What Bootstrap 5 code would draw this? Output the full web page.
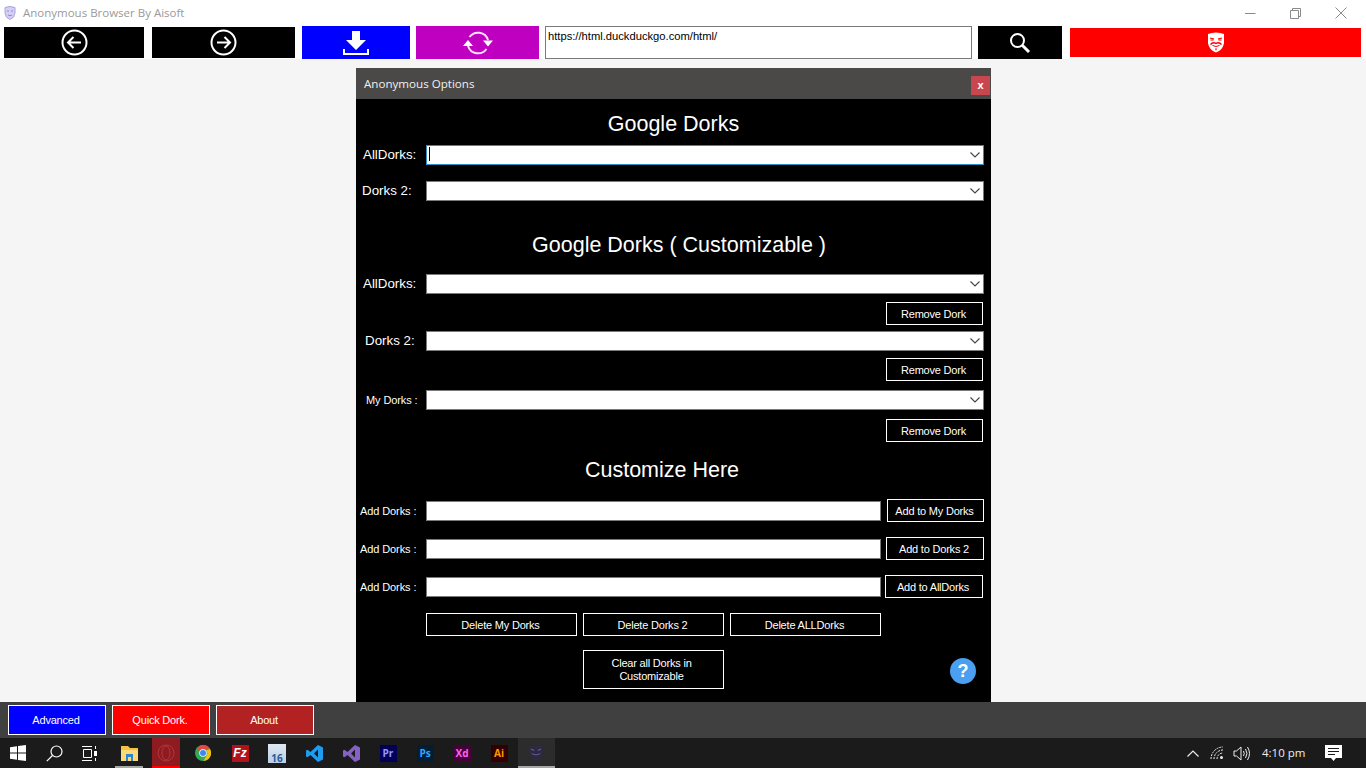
<!DOCTYPE html>
<html lang="en">
<head>
<meta charset="utf-8">
<title>Anonymous Browser By Aisoft</title>
<link href="https://cdn.jsdelivr.net/npm/bootstrap@5.3.0/dist/css/bootstrap.min.css" rel="stylesheet">
<style>
html,body{height:768px;overflow:hidden}
body{background:#f5f5f5;font-family:"Liberation Sans",Arial,sans-serif;font-size:12px;width:1366px}
.shell{height:768px}
.titlebar{height:26px;background:#fff;color:#9a9a9a;font-family:"Open Sans",sans-serif;font-size:11.5px;padding-left:4px;padding-right:2px}
.titlebar .ttl{margin-left:7px}
.winctl{width:45.5px}
.toolbar{height:33px;background:#fff;padding-left:4px}
.tbtn{border:0;border-radius:0;padding:0;display:flex;align-items:center;justify-content:center;flex:none}
.t-back{width:140px;height:31px;background:#000}
.t-fwd{width:143px;height:31px;background:#000;margin-left:8px}
.t-dl{width:108px;height:33px;background:#0000ff;margin-left:7px}
.t-ref{width:123px;height:33px;background:#c000c0;margin-left:6px}
.t-url{width:427px;height:33px;margin-left:6px;border:1px solid #7a7a7a;background:#fff;font-family:"Liberation Sans",sans-serif;font-size:11.2px;padding:2px 2px;color:#000;line-height:15px;border-radius:0;display:block}
.t-srch{width:84px;height:33px;background:#000;margin-left:6px}
.t-red{width:291px;height:29px;background:#ff0000;margin-left:8px}
.stage{flex:1 1 auto;position:relative;background:#f5f5f5}
.dlg{position:absolute;left:356px;top:9px;width:635px;bottom:0;background:#000;color:#fff;overflow:hidden}
.dlg-head{height:31px;background:#4a4947;font-family:"Open Sans",sans-serif;font-size:11.6px;padding-left:8px;color:#f0f0f0}
.dlg-x{position:absolute;left:615px;top:8px;width:19px;height:19px;background:#c8474f;color:#fff;border:0;padding:0;font-size:11px;line-height:17px;font-weight:700;text-align:center}
.hd{font-size:21.5px;line-height:24px;font-weight:400;margin:0;text-align:center}
.hd1{margin-top:13px;width:635px}
.hd2{margin-top:31px;width:646px}
.hd3{margin-top:16px;width:612px}
.frow{display:flex;align-items:center;height:20px}
.flab{width:70px;flex:none;white-space:nowrap}
.lab-big{font-size:13.33px}
.lab-small{font-size:11px;letter-spacing:-.1px;padding-top:1px}
.combo{width:558px;height:20px;flex:none;min-height:0;padding:0 2px;border:1px solid #7a7a7a;border-radius:0;background-color:#fff;background-image:url("data:image/svg+xml,%3csvg xmlns='http://www.w3.org/2000/svg' viewBox='0 0 10 6'%3e%3cpath fill='none' stroke='%23444' stroke-width='1.100' d='M.5.500l4.500 4.500 4.500-4.500'/%3e%3c/svg%3e");background-position:right 3px center;background-size:10px 6px;font-size:12px}
.combo.on{border-color:#2b8fc5}
.caret-line{position:absolute;left:73px;top:2px;width:1px;height:14px;background:#000}
.rbtn{display:block;width:97px;height:23px;padding:1px 2px 0 0;background:#000;border:1px solid #fff;border-radius:0;color:#fff;font-size:11px;letter-spacing:-.2px;line-height:20px;text-align:center}
.rbtn:hover{background:#000;color:#fff}
.input-add{width:455px;height:20px;flex:none;min-height:0;padding:0 2px;border:1px solid #7a7a7a;border-radius:0;font-size:12px}
.addrow{display:flex;align-items:center;height:23px}
.help{position:absolute;left:594px;top:590px;width:26px;height:26px;border-radius:50%;background:#4a9ff0;color:#fff;font-size:18px;font-weight:700;line-height:26px;text-align:center}
.bottombar{height:36px;background:#404040;padding-left:8px;gap:6px}
.bbtn{width:98px;height:30px;padding:0 2px 0 0;border:1px solid #fff;border-radius:0;color:#fff;font-size:11px;letter-spacing:-.2px;line-height:28px}
.b-a{background:#0000ff}.b-q{background:#ff0000}.b-i{background:#b22222}
.taskbar{height:30px;background:#1b1b1b;color:#fff}
.tslot{height:30px;display:flex;align-items:center;justify-content:center;flex:none;position:relative}
.s36{width:36px}.s37{width:37px}
.hl-o::before{content:"";position:absolute;left:4.5px;right:4.5px;top:0;bottom:0;background:#8e1b20;border-bottom:2px solid #ff0000}
.ul::after{content:"";position:absolute;left:4.5px;right:4.5px;bottom:0;height:2px;background:#a8a8a8}
.hl-a{background:#2c2c2c}
.hl-a::after{content:"";position:absolute;left:0;right:0;bottom:0;height:2px;background:#a8a8a8}
.adobe{width:17px;height:17px;display:flex;align-items:center;justify-content:center;font-size:10px;font-weight:700;line-height:1;position:relative;font-family:"Open Sans",sans-serif}
.clock{font-family:"Open Sans",sans-serif;font-size:11.5px;color:#eee;width:42px;text-align:center;white-space:nowrap}
.ps-7a{padding-left:7px}.ps-6a{padding-left:6px}.ps-9a{padding-left:9px}.ps-10a{padding-left:10px}.ps-4a{padding-left:4px}
.lf1{margin-top:9px}.lf2{margin-top:16px}
.hd2{margin-top:32px}
.lf3{margin-top:17px}.rb1{margin:8px 0 0 530px}
.lf4{margin-top:6px}.rb2{margin:7px 0 0 530px}
.lf5{margin-top:9px}.rb3{margin:9px 0 0 530px}
.ar1{margin-top:17px}.ar2{margin-top:15px}
.ab1{margin-left:6px}.ab2{margin-left:5px;width:98px}.ab3{margin-left:4px;width:98px}
.delrow{margin:15px 0 0 70px}.d1,.d3{width:151px}.d2{width:141px;margin:0 6px}
.clearrow{margin:14px 0 0 227px}.clr{width:141px;height:39px;line-height:13px;padding:0 14px 0 10px}
.ml-ex{margin-left:2.500px}
.fz-ic{background:#b3121d;color:#fff;font-style:italic;font-family:"Liberation Sans",sans-serif;font-size:12px}
.six-ic{background:linear-gradient(#dfe8f2,#b9cfe6);color:#2a5a9a;width:18px;height:19px;font-size:10px;align-items:flex-end}
.a-pr{background:#00005b;color:#9999ff}
.a-ps{background:#001e36;color:#31a8ff}
.a-xd{background:#470137;color:#ff61f6}
.a-ai{background:#330000;color:#ff9a00}
.tray{height:30px}
.tr-chev{margin-right:11px}.tr-wifi{margin-right:7px}.tr-vol{margin-right:12px}
.tr-note{margin-left:21px}
.tr-end{width:24px}
</style>
</head>
<body>
<div class="shell d-flex flex-column">
  <div class="titlebar d-flex align-items-center">
    <svg width="12" height="14" viewBox="0 0 12 14"><path d="M1 1.500Q6-.5 11 1.500V7Q10.500 12 6 13.500 1.500 12 1 7Z" fill="#d4d0f2" stroke="#a9a3e0"/><path d="M3 5h2M7 5h2M4 9q2 1.500 4 0" stroke="#8e86d4" fill="none"/></svg>
    <span class="ttl">Anonymous Browser By Aisoft</span>
    <div class="ms-auto d-flex align-items-center">
      <div class="winctl d-flex justify-content-center"><svg width="11" height="11" viewBox="0 0 11 11"><path d="M0 5.500h10.500" stroke="#8a8a8a"/></svg></div>
      <div class="winctl d-flex justify-content-center"><svg width="11" height="11" viewBox="0 0 11 11"><path d="M.5 2.500h8v8h-8zM2.500 2.500v-2h8v8h-2" fill="none" stroke="#8a8a8a"/></svg></div>
      <div class="winctl d-flex justify-content-center"><svg width="12" height="12" viewBox="0 0 12 12"><path d="M.5.500l11 11M11.500.500l-11 11" stroke="#8a8a8a"/></svg></div>
    </div>
  </div>
  <div class="toolbar d-flex align-items-center">
    <button class="tbtn t-back" aria-label="Back"><svg width="27" height="27" viewBox="0 0 27 27" fill="none" stroke="#fff" stroke-width="2"><circle cx="13.500" cy="13.500" r="12"/><path d="M20 13.500H7M12.500 8l-5.500 5.500 5.500 5.500"/></svg></button>
    <button class="tbtn t-fwd" aria-label="Forward"><svg width="27" height="27" viewBox="0 0 27 27" fill="none" stroke="#fff" stroke-width="2"><circle cx="13.500" cy="13.500" r="12"/><path d="M7 13.500h13M14.500 8l5.500 5.500-5.500 5.500"/></svg></button>
    <button class="tbtn t-dl" aria-label="Download"><svg width="26" height="26" viewBox="0 0 26 26"><path d="M9 1h8v9h6L13 20 3 10h6z" fill="#fff"/><path d="M1 19v5h24v-5" fill="none" stroke="#fff" stroke-width="2"/></svg></button>
    <button class="tbtn t-ref" aria-label="Refresh"><svg width="30" height="26" viewBox="0 0 30 26" fill="none"><path d="M6.500 7A10.500 10.500 0 0 1 25 10" stroke="#fbe4fb" stroke-width="2"/><path d="M23.500 19A10.500 10.500 0 0 1 5 16" stroke="#fbe4fb" stroke-width="2"/><path d="M20 10.500h10l-5 6zM0 16h10L5 10z" fill="#fff"/></svg></button>
    <div class="t-url">https://html.duckduckgo.com/html/</div>
    <button class="tbtn t-srch" aria-label="Search"><svg width="22" height="22" viewBox="0 0 22 22" fill="none" stroke="#fff"><circle cx="8.500" cy="8.500" r="6.500" stroke-width="2"/><path d="M13 13l7 7" stroke-width="3"/></svg></button>
    <button class="tbtn t-red" aria-label="Anonymous"><svg width="18" height="21" viewBox="0 0 18 21"><path d="M1 2Q9-1 17 2V11Q16 18 9 20.500 2 18 1 11Z" fill="#fff"/><path d="M3 6l4 1M15 6l-4 1M3.500 8h3M11.500 8h3" stroke="#f00" stroke-width="1.200"/><path d="M3.500 12.500Q6 9.500 9 11.500 12 9.500 14.500 12.500" fill="none" stroke="#f00" stroke-width="1.400"/><path d="M5.500 13.500Q9 15.500 12.500 13.500" fill="none" stroke="#f00"/><path d="M8 16.500h2l-1 2.500z" fill="#f00"/></svg></button>
  </div>
  <div class="stage">
    <div class="dlg">
      <div class="dlg-head d-flex align-items-center">Anonymous Options</div>
      <button class="dlg-x" aria-label="Close">x</button>
      <h2 class="hd hd1">Google Dorks</h2>

      <div class="frow position-relative lf1"><div class="flab lab-big ps-7a">AllDorks:</div><select class="form-select combo on" aria-label="AllDorks"></select><span class="caret-line"></span></div>
      <div class="frow lf2"><div class="flab lab-big ps-6a">Dorks 2:</div><select class="form-select combo" aria-label="Dorks 2"></select></div>

      <h2 class="hd hd2">Google Dorks ( Customizable )</h2>

      <div class="frow lf3"><div class="flab lab-big ps-7a">AllDorks:</div><select class="form-select combo" aria-label="AllDorks custom"></select></div>
      <div class="d-flex rb1"><button class="rbtn">Remove Dork</button></div>
      <div class="frow lf4"><div class="flab lab-big ps-9a">Dorks 2:</div><select class="form-select combo" aria-label="Dorks 2 custom"></select></div>
      <div class="d-flex rb2"><button class="rbtn">Remove Dork</button></div>
      <div class="frow lf5"><div class="flab lab-small ps-10a">My Dorks :</div><select class="form-select combo" aria-label="My Dorks"></select></div>
      <div class="d-flex rb3"><button class="rbtn">Remove Dork</button></div>

      <h2 class="hd hd3">Customize Here</h2>

      <div class="addrow ar1"><div class="flab lab-small ps-4a">Add Dorks :</div><input class="form-control input-add" type="text" aria-label="Add"><button class="rbtn ab1">Add to My Dorks</button></div>
      <div class="addrow ar2"><div class="flab lab-small ps-4a">Add Dorks :</div><input class="form-control input-add" type="text" aria-label="Add"><button class="rbtn ab2">Add to Dorks 2</button></div>
      <div class="addrow ar2"><div class="flab lab-small ps-4a">Add Dorks :</div><input class="form-control input-add" type="text" aria-label="Add"><button class="rbtn ab3">Add to AllDorks</button></div>

      <div class="delrow d-flex"><button class="rbtn d1">Delete My Dorks</button><button class="rbtn d2">Delete Dorks 2</button><button class="rbtn d3">Delete ALLDorks</button></div>
      <div class="clearrow d-flex"><button class="rbtn clr">Clear all Dorks in Customizable</button></div>
      <div class="help">?</div>
    </div>
  </div>
  <div class="bottombar d-flex align-items-center">
    <button class="btn bbtn b-a">Advanced</button>
    <button class="btn bbtn b-q">Quick Dork.</button>
    <button class="btn bbtn b-i">About</button>
  </div>
  <div class="taskbar d-flex align-items-center">
    <div class="tslot s36"><svg width="16" height="16" viewBox="0 0 16 16" fill="#fff"><path d="M0 2.300L7 1.300V7.500H0zM8 1.100L16 0V7.500H8zM0 8.500H7V14.700L0 13.700zM8 8.500H16V16L8 14.900z"/></svg></div>
    <div class="tslot s36"><svg width="17" height="17" viewBox="0 0 17 17" fill="none" stroke="#fff" stroke-width="1.200"><circle cx="10.500" cy="6.500" r="5.500"/><path d="M6.500 10.500L.8 16.200"/></svg></div>
    <div class="tslot s36"><svg width="16" height="15" viewBox="0 0 16 15" fill="none" stroke="#fff"><path d="M0 .500h10M0 14.500h10M1.500 3.500h8v8h-8zM13.500 0v3M13.500 12v3"/><rect x="12" y="5" width="3" height="5" fill="#fff" stroke="none"/></svg></div>
    <div class="tslot s37 ul ml-ex"><svg class="position-relative" width="17" height="15" viewBox="0 0 17 15"><path d="M0 0h7l2 2h8v13H0z" fill="#f5c242"/><path d="M0 4h17v11H0z" fill="#fbd97a"/><path d="M5 8h7v7H5z" fill="#2f86c5"/><path d="M7 11h3v4H7z" fill="#fbd97a"/></svg></div>
    <div class="tslot s37 hl-o"><svg class="position-relative" width="18" height="18" viewBox="0 0 18 18" fill="none" stroke="#b5353b"><circle cx="9" cy="9" r="8"/><ellipse cx="9" cy="9" rx="4" ry="7"/></svg></div>
    <div class="tslot s37"><svg width="16" height="16" viewBox="0 0 32 32"><circle cx="16" cy="16" r="16" fill="#34a853"/><path d="M16 0A16 16 0 0 1 30 8H16A8 8 0 0 0 8.500 13L4.500 6A16 16 0 0 1 16 0Z" fill="#e04a3f"/><path d="M30 8A16 16 0 0 1 17 32L23 21A8 8 0 0 0 22.500 11Z" fill="#f4c20d"/><circle cx="16" cy="16" r="7.500" fill="#fff"/><circle cx="16" cy="16" r="6" fill="#4285f4"/></svg></div>
    <div class="tslot s37"><div class="adobe fz-ic">Fz</div></div>
    <div class="tslot s37"><div class="adobe six-ic">16</div></div>
    <div class="tslot s37"><svg width="17" height="17" viewBox="0 0 17 17"><path d="M12 0l5 2.500v12L12 17 4.500 10 1.500 12.300 0 11.500V5.500l1.500-.8L4.500 7zM12 4.500L8 8.500l4 4z" fill="#1f9cf0"/></svg></div>
    <div class="tslot s37"><svg width="17" height="17" viewBox="0 0 17 17"><path d="M12 0l5 2.500v12L12 17 4.500 10 1.500 12.300 0 11.500V5.500l1.500-.8L4.500 7zM12 4.500L8 8.500l4 4z" fill="#8661c5"/></svg></div>
    <div class="tslot s37"><div class="adobe a-pr">Pr</div></div>
    <div class="tslot s37"><div class="adobe a-ps">Ps</div></div>
    <div class="tslot s37"><div class="adobe a-xd">Xd</div></div>
    <div class="tslot s37"><div class="adobe a-ai">Ai</div></div>
    <div class="tslot s37 hl-a"><svg width="16" height="18" viewBox="0 0 18 21"><path d="M1 2Q9-1 17 2V11Q16 18 9 20.500 2 18 1 11Z" fill="#2e2a3e"/><path d="M3 6l4 1.500M15 6l-4 1.500M4 11q5 3 10 0" stroke="#5a5096" stroke-width="1.500" fill="none"/></svg></div>
    <div class="ms-auto d-flex align-items-center tray">
      <svg class="tr-chev" width="12" height="7" viewBox="0 0 12 7" fill="none" stroke="#eee" stroke-width="1.200"><path d="M.5 6.500L6 1l5.500 5.500"/></svg>
      <svg class="tr-wifi" width="16" height="14" viewBox="0 0 16 14" fill="none" stroke="#eee"><path d="M1 13A12 12 0 0 1 13 1M4 13A9 9 0 0 1 13 4M7 13A6 6 0 0 1 13 7" stroke-dasharray="2 1"/><circle cx="11.500" cy="11.500" r="1.500" fill="#eee" stroke="none"/></svg>
      <svg class="tr-vol" width="17" height="15" viewBox="0 0 17 15" fill="none" stroke="#eee"><path d="M1 5h2.500L8 1v13L3.500 10H1zM10.500 5q1.500 2.500 0 5M12.500 3q3 4.500 0 9M14.500 1q4 6.500 0 13"/></svg>
      <span class="clock">4:10 pm</span>
      <svg class="tr-note" width="17" height="17" viewBox="0 0 17 17"><path d="M0 0h17v13h-6l-2.500 3L6 13H0z" fill="#fff"/><path d="M3 3.500h11M3 6.500h11M3 9.500h7" stroke="#1b1b1b"/></svg>
      <div class="tr-end"></div>
    </div>
  </div>
</div>
</body>
</html>
